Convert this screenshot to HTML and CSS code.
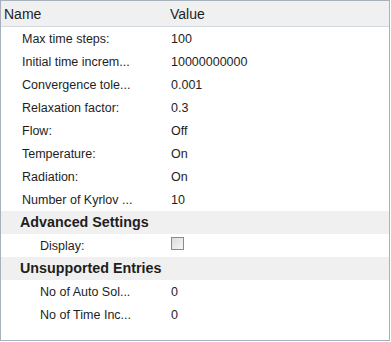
FILE: index.html
```html
<!DOCTYPE html>
<html lang="en">
<head>
  <meta charset="UTF-8" />
  <title>Properties</title>
  <link rel="stylesheet" href="styles.css">
</head>
<body>

  <div class="panel">
    <div class="head">
      <span class="col-name">Name</span>
      <span class="col-value">Value</span>
    </div>

    <div class="row"><span class="label">Max time steps:</span><span class="value">100</span></div>
    <div class="row"><span class="label">Initial time increm...</span><span class="value">10000000000</span></div>
    <div class="row"><span class="label">Convergence tole...</span><span class="value">0.001</span></div>
    <div class="row"><span class="label">Relaxation factor:</span><span class="value">0.3</span></div>
    <div class="row"><span class="label">Flow:</span><span class="value">Off</span></div>
    <div class="row"><span class="label">Temperature:</span><span class="value">On</span></div>
    <div class="row"><span class="label">Radiation:</span><span class="value">On</span></div>
    <div class="row"><span class="label">Number of Kyrlov ...</span><span class="value">10</span></div>

    <div class="section">Advanced Settings</div>
    <div class="row sub"><span class="label">Display:</span><span class="value"><span class="check"></span></span></div>

    <div class="section">Unsupported Entries</div>
    <div class="row sub"><span class="label">No of Auto Sol...</span><span class="value">0</span></div>
    <div class="row sub"><span class="label">No of Time Inc...</span><span class="value">0</span></div>
  </div>

</body>
</html>
```

FILE: styles.css
```css
body {
  margin: 0;
  background: #ffffff;
  font-family: 'Liberation Sans', Arial, sans-serif;
  color: #1e1e1e;
}

.panel {
  width: 388px;
  height: 339px;
  border: 1px solid #a7b1bb;
  background: #ffffff;
}

.head {
  display: flex;
  height: 25px;
  align-items: center;
  background: #f0f0f0;
  border-bottom: 1px solid #d3dbe2;
  font-size: 14px;
}

.col-name {
  width: 166px;
  padding-left: 3px;
}

.row {
  display: flex;
  height: 23px;
  align-items: center;
  font-size: 12.5px;
}

.label {
  width: 149px;
  padding-left: 21px;
}

.sub .label {
  width: 131px;
  padding-left: 39px;
}

.value {
  display: flex;
  align-items: center;
}

.section {
  height: 23px;
  line-height: 22px;
  padding-left: 19px;
  background: #f0f0f0;
  font-size: 14.3px;
  font-weight: bold;
}

.check {
  width: 11px;
  height: 11px;
  margin-top: -4px;
  border: 1px solid #8a8a8a;
  background: linear-gradient(135deg, #dcdcdc, #f6f6f6);
}
```
